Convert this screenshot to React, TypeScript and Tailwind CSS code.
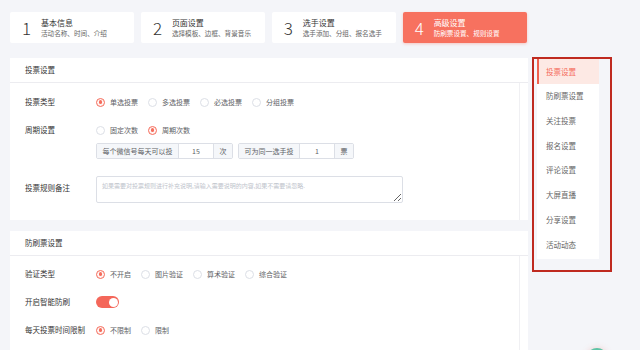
import React from 'react';

/**
 * 步骤卡片
 */
interface StepProps {
  num: string;
  title: string;
  desc: string;
  active?: boolean;
}

const Step: React.FC<StepProps> = ({ num, title, desc, active }) => (
  <div
    className={
      active
        ? 'h-[31px] flex items-center pl-[12px] rounded-[2px] bg-[#f7715f] shadow-[0_1px_3px_rgba(247,113,95,0.35)]'
        : 'h-[31px] flex items-center pl-[12px] rounded-[2px] bg-white'
    }
  >
    <span
      className={
        active
          ? 'w-[19px] text-[17px] font-light leading-none text-white'
          : 'w-[19px] text-[17px] font-light leading-none text-[#333]'
      }
    >
      {num}
    </span>
    <div className="flex flex-col">
      <span className={active ? 'text-[8px] leading-[11px] text-white' : 'text-[8px] leading-[11px] text-[#333]'}>
        {title}
      </span>
      <span className={active ? 'text-[6.6px] leading-[10px] text-white' : 'text-[6.6px] leading-[10px] text-[#666]'}>
        {desc}
      </span>
    </div>
  </div>
);

/**
 * 单选按钮
 */
const Radio: React.FC<{ label: string; checked?: boolean }> = ({ label, checked }) => (
  <div className="flex items-center mr-[10px]">
    {checked ? (
      <span className="w-[9px] h-[9px] rounded-full border border-[#f56c5c] bg-[#fff4f2] flex items-center justify-center">
        <span className="w-[3.5px] h-[3.5px] rounded-full bg-[#f56c5c]" />
      </span>
    ) : (
      <span className="w-[9px] h-[9px] rounded-full border border-[#dcdfe6] bg-white" />
    )}
    <span className="ml-[5px] text-[7px] text-[#606266]">{label}</span>
  </div>
);

/**
 * 表单行
 */
const Row: React.FC<{ label: string; className?: string; children?: React.ReactNode }> = ({
  label,
  className = '',
  children,
}) => (
  <div className={'flex items-center ' + className}>
    <span className="w-[71px] shrink-0 text-[7.5px] text-[#333]">{label}</span>
    <div className="flex items-center">{children}</div>
  </div>
);

/**
 * 输入框组合
 */
const InputGroup: React.FC<{ prefix: string; value: string; unit: string; w: string }> = ({
  prefix,
  value,
  unit,
  w,
}) => (
  <div className="flex h-[16px] border border-[#dcdfe6] rounded-[2px] text-[7px] text-[#606266] mr-[5px]">
    <span className={'flex items-center justify-center whitespace-nowrap bg-[#f5f7fa] border-r border-[#dcdfe6] ' + w}>
      {prefix}
    </span>
    <span className="w-[34px] flex items-center justify-center bg-white">{value}</span>
    <span className="w-[19px] flex items-center justify-center bg-[#f5f7fa] border-l border-[#dcdfe6]">{unit}</span>
  </div>
);

const PanelHeader: React.FC<{ title: string }> = ({ title }) => (
  <div className="h-[25px] flex items-center px-[15px] border-b border-[#ececf0] text-[7.5px] text-[#333]">
    {title}
  </div>
);

const menus = ['投票设置', '防刷票设置', '关注投票', '报名设置', '评论设置', '大屏直播', '分享设置', '活动动态'];

export default function App() {
  return (
    <div
      className="relative w-[640px] h-[350px] overflow-hidden bg-[#f4f5f9] flex pl-[10px] pt-[12px]"
      style={{ fontFamily: '"Noto Sans CJK SC", "Noto Sans", sans-serif' }}
    >
      {/* 左侧主体 */}
      <div className="w-[518px] flex flex-col">
        <div className="grid grid-cols-4 gap-[6.5px] w-[517px]">
          <Step num="1" title="基本信息" desc="活动名称、时间、介绍" />
          <Step num="2" title="页面设置" desc="选择模板、边框、背景音乐" />
          <Step num="3" title="选手设置" desc="选手添加、分组、报名选手" />
          <Step num="4" title="高级设置" desc="防刷票设置、规则设置" active />
        </div>

        {/* 投票设置 */}
        <div className="mt-[15px] bg-white">
          <PanelHeader title="投票设置" />
          <div className="px-[15px] pt-[11px] pb-[17px] mr-[8px] border-r border-[#f0f0f3]">
            <Row label="投票类型" className="h-[16px]">
              <Radio label="单选投票" checked />
              <Radio label="多选投票" />
              <Radio label="必选投票" />
              <Radio label="分组投票" />
            </Row>
            <Row label="周期设置" className="h-[16px] mt-[12px]">
              <Radio label="固定次数" />
              <Radio label="周期次数" checked />
            </Row>
            <Row label="" className="mt-[5px]">
              <InputGroup prefix="每个微信号每天可以投" value="15" unit="次" w="w-[82px]" />
              <InputGroup prefix="可为同一选手投" value="1" unit="票" w="w-[61px]" />
            </Row>
            <div className="flex items-center mt-[17px]">
              <span className="w-[71px] shrink-0 text-[7.5px] text-[#333] -mt-[4px]">投票规则备注</span>
              <textarea
                className="w-[307px] h-[27px] border border-[#dcdfe6] rounded-[2px] px-[5px] pt-[4px] text-[6px] leading-[9px] placeholder:text-[#c0c4cc] outline-none"
                placeholder="如果需要对投票规则进行补充说明,请输入需要说明的内容,如果不需要请忽略."
              />
            </div>
          </div>
        </div>

        {/* 防刷票设置 */}
        <div className="mt-[11px] bg-white flex-1">
          <PanelHeader title="防刷票设置" />
          <div className="px-[15px] pt-[10px] h-full mr-[8px] border-r border-[#f0f0f3]">
            <Row label="验证类型" className="h-[16px]">
              <Radio label="不开启" checked />
              <Radio label="图片验证" />
              <Radio label="算术验证" />
              <Radio label="综合验证" />
            </Row>
            <Row label="开启智能防刷" className="h-[16px] mt-[12px]">
              <span className="w-[23px] h-[12px] rounded-full bg-[#f4675a] flex items-center justify-end pr-[1.5px]">
                <span className="w-[9px] h-[9px] rounded-full bg-white" />
              </span>
            </Row>
            <Row label="每天投票时间限制" className="h-[16px] mt-[12px]">
              <Radio label="不限制" checked />
              <Radio label="限制" />
            </Row>
          </div>
        </div>
      </div>

      {/* 右侧菜单 */}
      <div className="ml-[4px] mt-[45px] w-[80px] h-[215px] border-2 border-[#bf2a20] pl-[3px] pr-[11px]">
        <div className="bg-white h-[200px]">
          {menus.map((m, i) =>
            i === 0 ? (
              <div
                key={m}
                className="h-[24.7px] flex items-center pl-[7px] bg-[#fde9e4] border-l-2 border-[#f0614f] text-[7.5px] text-[#f56c5c]"
              >
                {m}
              </div>
            ) : (
              <div key={m} className="h-[24.7px] flex items-center pl-[9px] text-[7.5px] text-[#666]">
                {m}
              </div>
            ),
          )}
        </div>
      </div>

      {/* 右下角浮动按钮 */}
      <div className="absolute left-[586px] top-[348px] w-[22px] h-[22px] rounded-full bg-[#5ec4a6] shadow-[0_0_6px_rgba(245,108,92,0.25)]" />
    </div>
  );
}
